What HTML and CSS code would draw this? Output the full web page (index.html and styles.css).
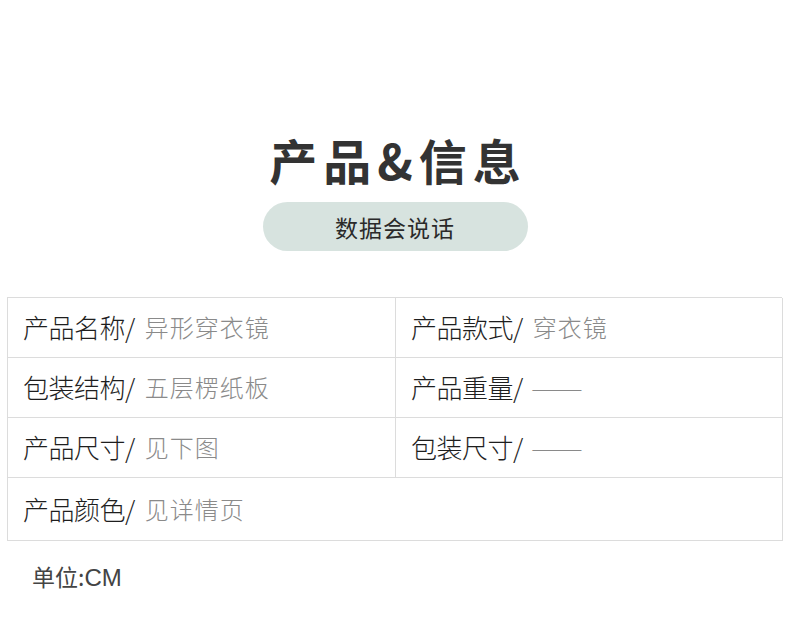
FILE: index.html
```html
<!DOCTYPE html>
<html lang="zh">
<head>
<meta charset="utf-8">
<link rel="stylesheet" href="styles.css">
</head>
<body>
<div class="page">
  <h1 class="title">产品&amp;信息</h1>
  <div class="pill">数据会说话</div>
  <div class="table">
    <div class="cell"><span class="label">产品名称/</span><span class="value">异形穿衣镜</span></div>
    <div class="cell"><span class="label">产品款式/</span><span class="value">穿衣镜</span></div>
    <div class="cell"><span class="label">包装结构/</span><span class="value">五层楞纸板</span></div>
    <div class="cell"><span class="label">产品重量/</span><span class="value dash">——</span></div>
    <div class="cell"><span class="label">产品尺寸/</span><span class="value">见下图</span></div>
    <div class="cell"><span class="label">包装尺寸/</span><span class="value dash">——</span></div>
    <div class="cell wide"><span class="label">产品颜色/</span><span class="value">见详情页</span></div>
  </div>
  <div class="unit">单位:<span class="latin">CM</span></div>
</div>
</body>
</html>
```
FILE: styles.css
```css
html, body {
  margin: 0;
  padding: 0;
  background: #fff;
}
body {
  font-family: "Noto Sans CJK SC", "Noto Sans", sans-serif;
  color: #222;
}
.page {
  width: 790px;
  height: 627px;
  display: flex;
  flex-direction: column;
  align-items: center;
}
.title {
  margin: 125px 0 0 0;
  font-size: 48px;
  line-height: 68px;
  font-weight: 700;
  color: #333;
  letter-spacing: 6px;
  padding-left: 6px;
}
.pill {
  margin-top: 9px;
  width: 265px;
  height: 49px;
  border-radius: 25px;
  background: #d7e3df;
  display: flex;
  align-items: center;
  justify-content: center;
  font-size: 23px;
  font-weight: 400;
  color: #2a2a2a;
  letter-spacing: 1px;
}
.table {
  margin-top: 46px;
  width: 775px;
  align-self: flex-start;
  margin-left: 7px;
  display: grid;
  grid-template-columns: 388px 387px;
  border-top: 1px solid #dcdcdc;
  border-left: 1px solid #dcdcdc;
  box-sizing: border-box;
}
.cell {
  height: 60px;
  box-sizing: border-box;
  border-right: 1px solid #dcdcdc;
  border-bottom: 1px solid #dcdcdc;
  display: flex;
  align-items: center;
  padding-left: 15px;
  padding-bottom: 2px;
}
.cell.wide {
  grid-column: 1 / 3;
  height: 63px;
}
.label {
  font-size: 26px;
  font-weight: 300;
  color: #1e1e1e;
  letter-spacing: -0.5px;
}
.value {
  font-size: 24px;
  font-weight: 300;
  color: #8a8a8a;
  margin-left: 10px;
  letter-spacing: 1px;
}
.value.dash {
  display: inline-block;
  letter-spacing: 0;
  margin-left: 8px;
  transform: scaleX(1.3);
  transform-origin: left center;
}
.unit {
  align-self: flex-start;
  margin-left: 32px;
  margin-top: 18px;
  font-size: 23px;
  font-weight: 400;
  color: #444;
}
.unit .latin {
  font-family: "Liberation Sans", sans-serif;
  font-size: 24px;
}
```
